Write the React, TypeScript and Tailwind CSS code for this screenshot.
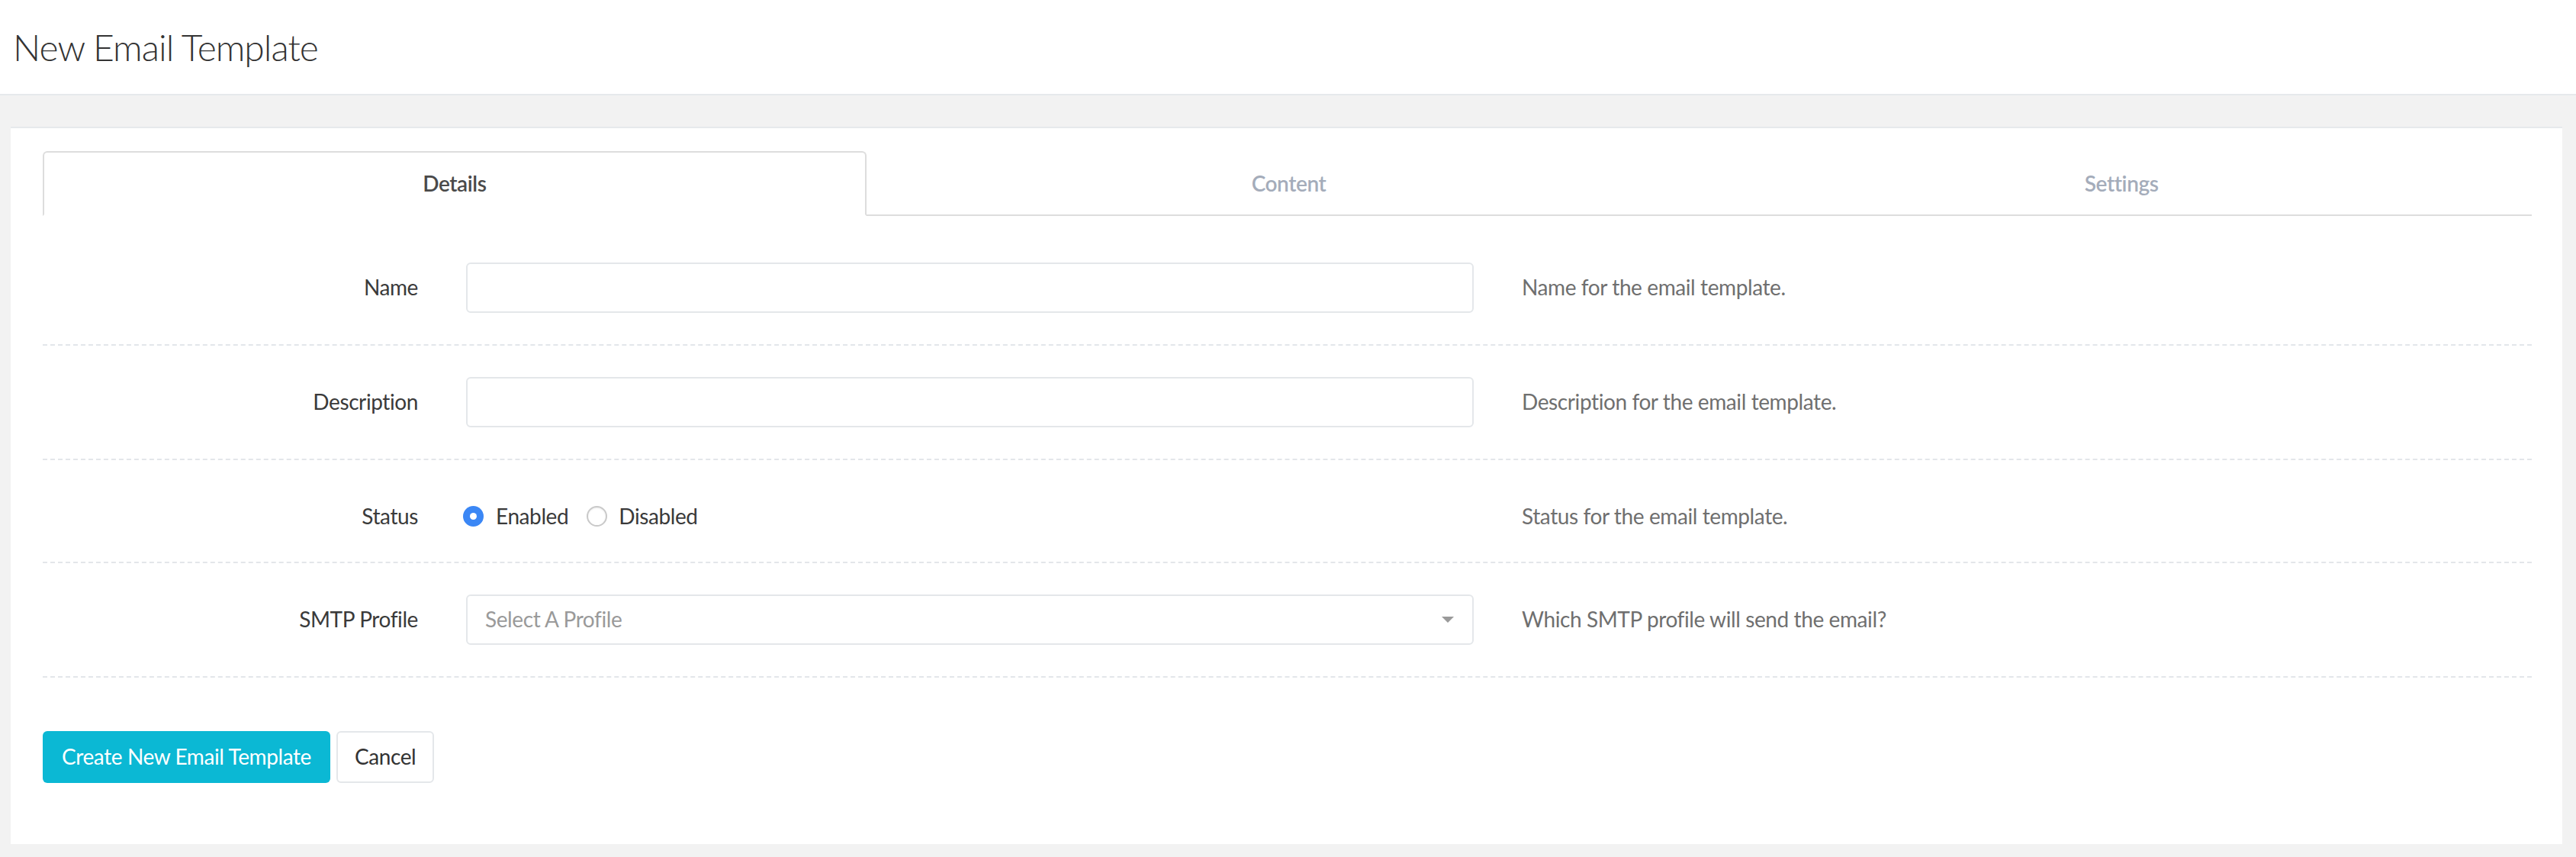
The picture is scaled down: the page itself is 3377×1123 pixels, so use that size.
const tabs = [
  { key: "details", label: "Details", active: true },
  { key: "content", label: "Content", active: false },
  { key: "settings", label: "Settings", active: false },
];

function FieldRow({
  label,
  help,
  children,
  className = "py-[41px]",
}: {
  label: string;
  help: string;
  children: React.ReactNode;
  className?: string;
}) {
  return (
    <div className={`flex items-center border-b-2 border-dashed border-[#e3e6ea] ${className}`}>
      <label className="w-[492px] shrink-0 text-right text-[#3a3a3a]">{label}</label>
      <div className="ml-[63px] w-[1321px] shrink-0">{children}</div>
      <p className="ml-[63px] text-[#6f6f6f]">{help}</p>
    </div>
  );
}

export default function App() {
  return (
    <div
      className="min-h-screen bg-[#f2f2f2] text-[28px] leading-[1.4] tracking-[-0.4px]"
      style={{ fontFamily: "Lato, 'Liberation Sans', sans-serif" }}
    >
      <header className="flex h-[125px] items-center border-b-2 border-[#e6e9ec] bg-white px-[17px]">
        <h1 className="text-[48px] font-light tracking-[-1px] text-[#333333]">New Email Template</h1>
      </header>

      <div className="pl-[14px] pr-[18px] pt-[41px] pb-[18px]">
        <div className="border-t-2 border-[#e6e9ec] bg-white pl-[42px] pr-[40px] pt-[30px] pb-[80px]">
          {/* tabs */}
          <div className="flex gap-[16px] border-b-2 border-[#dddddd]">
            {tabs.map((tab) => (
              <div
                key={tab.key}
                className={`-mb-[2px] flex h-[85px] flex-1 items-center justify-center font-semibold ${
                  tab.active
                    ? "rounded-t-[6px] border-2 border-[#dddddd] border-b-white bg-white text-[#4a4a4a]"
                    : "text-[#a4acba]"
                }`}
              >
                {tab.label}
              </div>
            ))}
          </div>

          {/* form */}
          <div className="pt-[20px]">
            <FieldRow label="Name" help="Name for the email template.">
              <input
                type="text"
                className="h-[66px] w-full rounded-[6px] border-2 border-[#e4e7ea] bg-white px-[24px] outline-none"
              />
            </FieldRow>

            <FieldRow label="Description" help="Description for the email template.">
              <input
                type="text"
                className="h-[66px] w-full rounded-[6px] border-2 border-[#e4e7ea] bg-white px-[24px] outline-none"
              />
            </FieldRow>

            <FieldRow
              label="Status"
              help="Status for the email template."
              className="pt-[52px] pb-[38px]"
            >
              <div className="-ml-[4px] flex h-[43px] items-center text-[#3a3a3a]">
                <span className="flex h-[27px] w-[27px] items-center justify-center rounded-full bg-[#3b87f5]">
                  <span className="h-[9px] w-[9px] rounded-full bg-white" />
                </span>
                <span className="ml-[16px]">Enabled</span>
                <span className="ml-[24px] h-[27px] w-[27px] rounded-full border-2 border-[#c9c9c9] bg-white shadow-[inset_0_1px_2px_rgba(0,0,0,0.08)]" />
                <span className="ml-[15px]">Disabled</span>
              </div>
            </FieldRow>

            <FieldRow label="SMTP Profile" help="Which SMTP profile will send the email?">
              <div className="flex h-[66px] w-full items-center justify-between rounded-[6px] border-2 border-[#e4e7ea] bg-white pl-[23px] pr-[24px]">
                <span className="text-[#9a9a9a]">Select A Profile</span>
                <span className="h-0 w-0 border-x-[8px] border-t-[8px] border-x-transparent border-t-[#9a9a9a]" />
              </div>
            </FieldRow>
          </div>

          {/* actions */}
          <div className="mt-[70px] flex gap-[8px]">
            <button className="h-[68px] rounded-[6px] bg-[#0bb8d4] px-[25px] text-white">
              Create New Email Template
            </button>
            <button className="h-[68px] rounded-[6px] border-2 border-[#e4e7ea] bg-white px-[22px] text-[#333333]">
              Cancel
            </button>
          </div>
        </div>
      </div>
    </div>
  );
}
